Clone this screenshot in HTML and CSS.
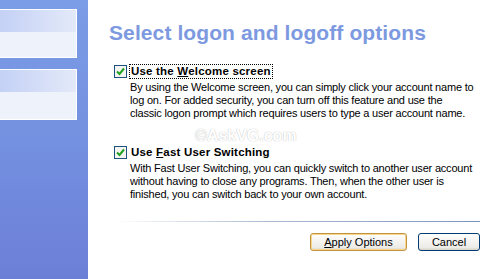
FILE: index.html
```html
<!DOCTYPE html>
<html>
<head>
<meta charset="utf-8">
<link rel="stylesheet" href="styles.css">
</head>
<body>
<div class="page">
  <aside class="sidebar">
    <div class="task-box">
      <div class="task-head"></div>
      <div class="task-body"></div>
    </div>
    <div class="task-box">
      <div class="task-head"></div>
      <div class="task-body"></div>
    </div>
  </aside>
  <main class="main">
    <h1 class="title">Select logon and logoff options</h1>
    <div class="option">
      <div class="opt-row">
        <span class="check"><svg width="9" height="9" viewBox="0 0 9 9"><path d="M1 4.5 L3.5 7 L8 1.5" fill="none" stroke="#21a121" stroke-width="2"/></svg></span>
        <span class="label focused">Use the <u>W</u>elcome screen</span>
      </div>
      <p class="desc">By using the Welcome screen, you can simply click your account name to<br>log on. For added security, you can turn off this feature and use the<br>classic logon prompt which requires users to type a user account name.</p>
    </div>
    <div class="option second">
      <div class="opt-row">
        <span class="check"><svg width="9" height="9" viewBox="0 0 9 9"><path d="M1 4.5 L3.5 7 L8 1.5" fill="none" stroke="#21a121" stroke-width="2"/></svg></span>
        <span class="label">Use <u>F</u>ast User Switching</span>
      </div>
      <p class="desc">With Fast User Switching, you can quickly switch to another user account<br>without having to close any programs. Then, when the other user is<br>finished, you can switch back to your own account.</p>
    </div>
    <div class="separator"></div>
    <div class="buttons">
      <button class="btn default"><u>A</u>pply Options</button>
      <button class="btn">Cancel</button>
    </div>
    <div class="watermark">©AskVG.com</div>
  </main>
</div>
</body>
</html>
```
FILE: styles.css
```css
* { box-sizing: border-box; }
html, body { margin: 0; padding: 0; background: #fff; }
body { width: 500px; height: 279px; overflow: hidden; font-family: "Liberation Sans", Arial, sans-serif; }
.page { display: flex; height: 279px; }
.sidebar {
  width: 88px; flex: none;
  background: linear-gradient(to bottom, #7b9ce6 0%, #7490e0 50%, #6c7fd7 100%);
  padding-top: 9px;
  display: flex; flex-direction: column; gap: 11px;
}
.task-box {
  width: 77px;
  border: 1px solid #fff; border-left: none;
  background: #eef2fb;
}
.task-head { height: 22px; background: linear-gradient(to right, #c4d1f5, #e3e9f9); }
.task-body { height: 25px; background: #eef2fb; }
.task-box + .task-box .task-body { height: 27px; }
.main { flex: 1; position: relative; padding-left: 21px; }
.title {
  margin: 20px 0 0 0;
  font-family: "Liberation Sans", Arial, sans-serif;
  font-weight: bold; font-size: 21px; line-height: 26px;
  color: #7d99df; letter-spacing: 0.1px;
}
.option { margin-top: 18px; padding-left: 5px; }
.option.second { margin-top: 25px; }
.opt-row { display: flex; align-items: center; height: 14px; }
.check {
  width: 13px; height: 13px; border: 1px solid #1c5180; background: #f4f4f0;
  display: flex; align-items: center; justify-content: center; flex: none;
}
.label {
  margin-left: 3px; padding: 0 1px;
  font-size: 11.5px; font-weight: bold; color: #000; line-height: 13px;
  letter-spacing: 0.2px;
}
.label.focused { outline: 1px dotted #000; }
.desc {
  margin: 3px 0 0 16px; font-size: 11px; line-height: 13px; color: #000;
  white-space: nowrap; letter-spacing: -0.2px;
}
.separator {
  margin: 20px 0 0 6px; width: 365px; height: 1px;
  background: linear-gradient(to right, rgba(122,150,192,0) 0%, #aebcd4 40%, #7a94bd 100%);
}
.buttons { display: flex; justify-content: flex-end; gap: 11px; width: 371px; margin-top: 11px; }
.btn {
  height: 18px; padding: 0; font-family: "Liberation Sans", Arial, sans-serif; font-size: 11px;
  color: #000; border-radius: 3px; border: 1px solid #003c74;
  background: linear-gradient(to bottom, #fefefd, #ecebe6 85%, #d6d0c5);
  width: 62px;
}
.btn.default { width: 97px; border-color: #c19443; box-shadow: inset 0 0 0 1px #f8d68a; }
.watermark {
  position: absolute; left: 107px; top: 127px;
  font-size: 16px; line-height: 18px; font-weight: bold; color: #fff;
  text-shadow: 0 0 1px #c8c8c8, 0 0 1px #c8c8c8;
}
```
